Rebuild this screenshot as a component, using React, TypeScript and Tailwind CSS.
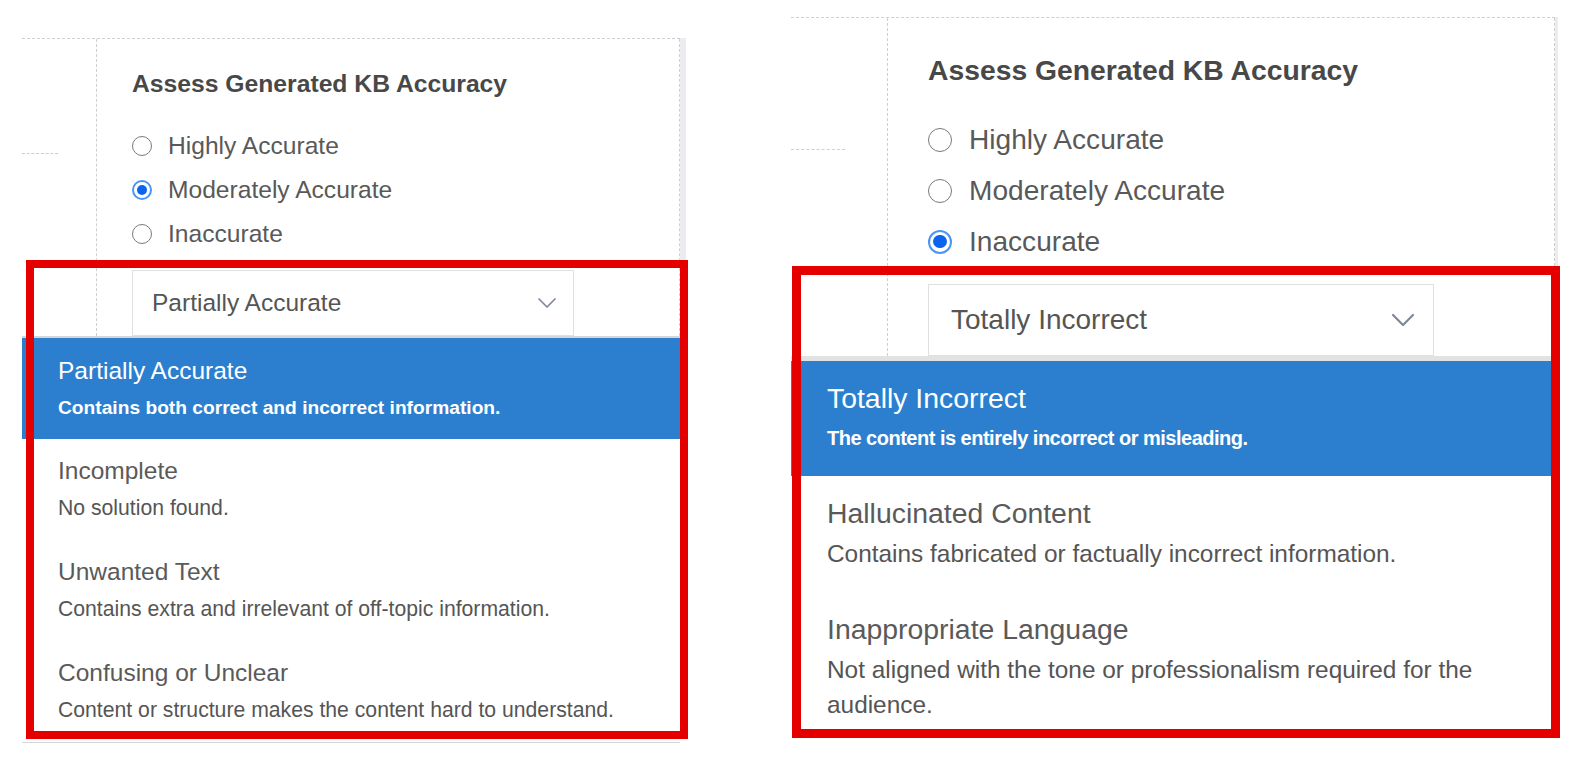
import { ChevronDown } from 'lucide-react'

type Option = { title: string; description: string }

type Look = {
  panel: string
  frame: string
  side: string
  stub: string
  content: string
  bar: string
  heading: string
  radioList: string
  radioRow: string
  radioSize: number
  radioLabel: string
  select: string
  selectText: string
  chevron: number
  dropdown: string
  item: string
  activeItem: string
  itemTitle: string
  itemDescription: string
  activeDescription: string
  highlight: string
}

const leftLook: Look = {
  panel: 'relative mt-[38px] ml-[22px] w-[664px] shrink-0',
  frame: 'flex w-[658px] border-t border-dashed border-[#cfcfcf]',
  side: 'w-[75px] shrink-0 border-r border-dashed border-[#cfcfcf]',
  stub: 'mt-[114px] w-[36px] border-t border-dashed border-[#cfcfcf]',
  content: 'flex-1 border-r border-dashed border-[#cfcfcf] pl-[35px] pt-[30px]',
  bar: 'w-[6px] bg-[#ebebf0]',
  heading: 'text-[24.7px] leading-[30px] font-bold text-[#484848]',
  radioList: 'mt-[25px] flex flex-col',
  radioRow: 'flex h-[44px] items-center gap-[16px] text-[24.6px] text-[#595959]',
  radioSize: 20,
  radioLabel: 'leading-[30px]',
  select:
    'mt-[14px] flex h-[66px] w-[442px] items-center justify-between border border-[#e0e0e0] pl-[19px] pr-[10px]',
  selectText: 'text-[24.5px] text-[#555]',
  chevron: 32,
  dropdown: 'w-[658px] border-t-2 border-b border-[#d6d6d6] bg-white',
  item: 'pl-[36px] pr-[20px] pt-[17px] pb-[19px]',
  activeItem: 'bg-[#2b7fce] pl-[36px] pr-[20px] pt-[18px] pb-[18px]',
  itemTitle: 'text-[24.5px] leading-[30px]',
  itemDescription: 'mt-[9px] text-[21.2px] leading-[26px] text-[#555]',
  activeDescription: 'mt-[9px] text-[19.2px] leading-[26px] font-bold text-white',
  highlight: 'absolute left-[4px] top-[222px] h-[479px] w-[662px] border-8 border-[#e50000]',
}

const rightLook: Look = {
  panel: 'relative mt-[17px] ml-[105px] w-[767px] shrink-0',
  frame: 'flex w-[764px] border-t border-dashed border-[#cfcfcf]',
  side: 'w-[97px] shrink-0 border-r border-dashed border-[#cfcfcf]',
  stub: 'mt-[131px] w-[54px] border-t border-dashed border-[#cfcfcf]',
  content: 'flex-1 border-r border-dashed border-[#cfcfcf] pl-[40px] pt-[35px]',
  bar: 'w-[3px] bg-[#ebebf0]',
  heading: 'text-[28.3px] leading-[34px] font-bold text-[#484848]',
  radioList: 'mt-[27px] flex flex-col',
  radioRow: 'flex h-[51px] items-center gap-[17px] text-[28.1px] text-[#595959]',
  radioSize: 24,
  radioLabel: 'leading-[34px]',
  select:
    'mt-[17px] flex h-[72px] w-[506px] items-center justify-between border border-[#e0e0e0] pl-[22px] pr-[10px]',
  selectText: 'text-[28px] text-[#555]',
  chevron: 40,
  dropdown: 'w-[764px] border-t-[5px] border-[#e2e2e2] bg-white',
  item: 'pl-[36px] pr-[40px] pt-[20px] pb-[21px]',
  activeItem: 'bg-[#2b7fce] pl-[36px] pr-[40px] pt-[20px] pb-[20px]',
  itemTitle: 'text-[28.4px] leading-[34px]',
  itemDescription: 'mt-[6px] text-[24.4px] leading-[35px] text-[#555]',
  activeDescription: 'mt-[6px] text-[20px] leading-[35px] font-bold tracking-[-0.5px] text-white',
  highlight: 'absolute left-[1px] top-[249px] h-[472px] w-[768px] border-[9px] border-[#e50000]',
}

const accuracyLevels = ['Highly Accurate', 'Moderately Accurate', 'Inaccurate']

const moderateReasons: Option[] = [
  { title: 'Partially Accurate', description: 'Contains both correct and incorrect information.' },
  { title: 'Incomplete', description: 'No solution found.' },
  { title: 'Unwanted Text', description: 'Contains extra and irrelevant of off-topic information.' },
  { title: 'Confusing or Unclear', description: 'Content or structure makes the content hard to understand.' },
]

const inaccurateReasons: Option[] = [
  { title: 'Totally Incorrect', description: 'The content is entirely incorrect or misleading.' },
  { title: 'Hallucinated Content', description: 'Contains fabricated or factually incorrect information.' },
  {
    title: 'Inappropriate Language',
    description: 'Not aligned with the tone or professionalism required for the audience.',
  },
]

export default function App() {
  return (
    <div
      className="flex h-[758px] w-[1580px] items-start overflow-hidden bg-white"
      style={{ fontFamily: '"Liberation Sans", Arial, sans-serif' }}
    >
      <AccuracyPanel look={leftLook} level="Moderately Accurate" options={moderateReasons} />
      <AccuracyPanel look={rightLook} level="Inaccurate" options={inaccurateReasons} />
    </div>
  )
}

function AccuracyPanel({ look, level, options }: { look: Look; level: string; options: Option[] }) {
  const [selected] = options

  return (
    <div className={look.panel}>
      <div className="flex">
        <div className={look.frame}>
          <div className={look.side}>
            <div className={look.stub} />
          </div>
          <div className={look.content}>
            <h2 className={look.heading}>Assess Generated KB Accuracy</h2>
            <div className={look.radioList}>
              {accuracyLevels.map((label) => (
                <label key={label} className={look.radioRow}>
                  <Radio checked={label === level} size={look.radioSize} />
                  <span className={look.radioLabel}>{label}</span>
                </label>
              ))}
            </div>
            <div className={look.select}>
              <span className={look.selectText}>{selected.title}</span>
              <ChevronDown size={look.chevron} strokeWidth={1.3} className="text-[#7f8898]" />
            </div>
          </div>
        </div>
        <div className={look.bar} />
      </div>

      <ul className={look.dropdown}>
        {options.map((option, index) => {
          const active = index === 0
          return (
            <li key={option.title} className={active ? look.activeItem : look.item}>
              <div className={`${look.itemTitle} ${active ? 'text-white' : 'text-[#5a5a5a]'}`}>
                {option.title}
              </div>
              <div className={active ? look.activeDescription : look.itemDescription}>
                {option.description}
              </div>
            </li>
          )
        })}
      </ul>

      {/* annotation frame */}
      <div className={look.highlight} />
    </div>
  )
}

function Radio({ checked, size }: { checked: boolean; size: number }) {
  if (checked) {
    return (
      <span
        className="flex shrink-0 items-center justify-center rounded-full border-2 border-[#4a95f3] bg-white"
        style={{ width: size, height: size }}
      >
        <span className="h-[66%] w-[66%] rounded-full bg-[#0b63ee]" />
      </span>
    )
  }
  return (
    <span
      className="shrink-0 rounded-full border-[1.5px] border-[#7a7a7a] bg-white"
      style={{ width: size, height: size }}
    />
  )
}
